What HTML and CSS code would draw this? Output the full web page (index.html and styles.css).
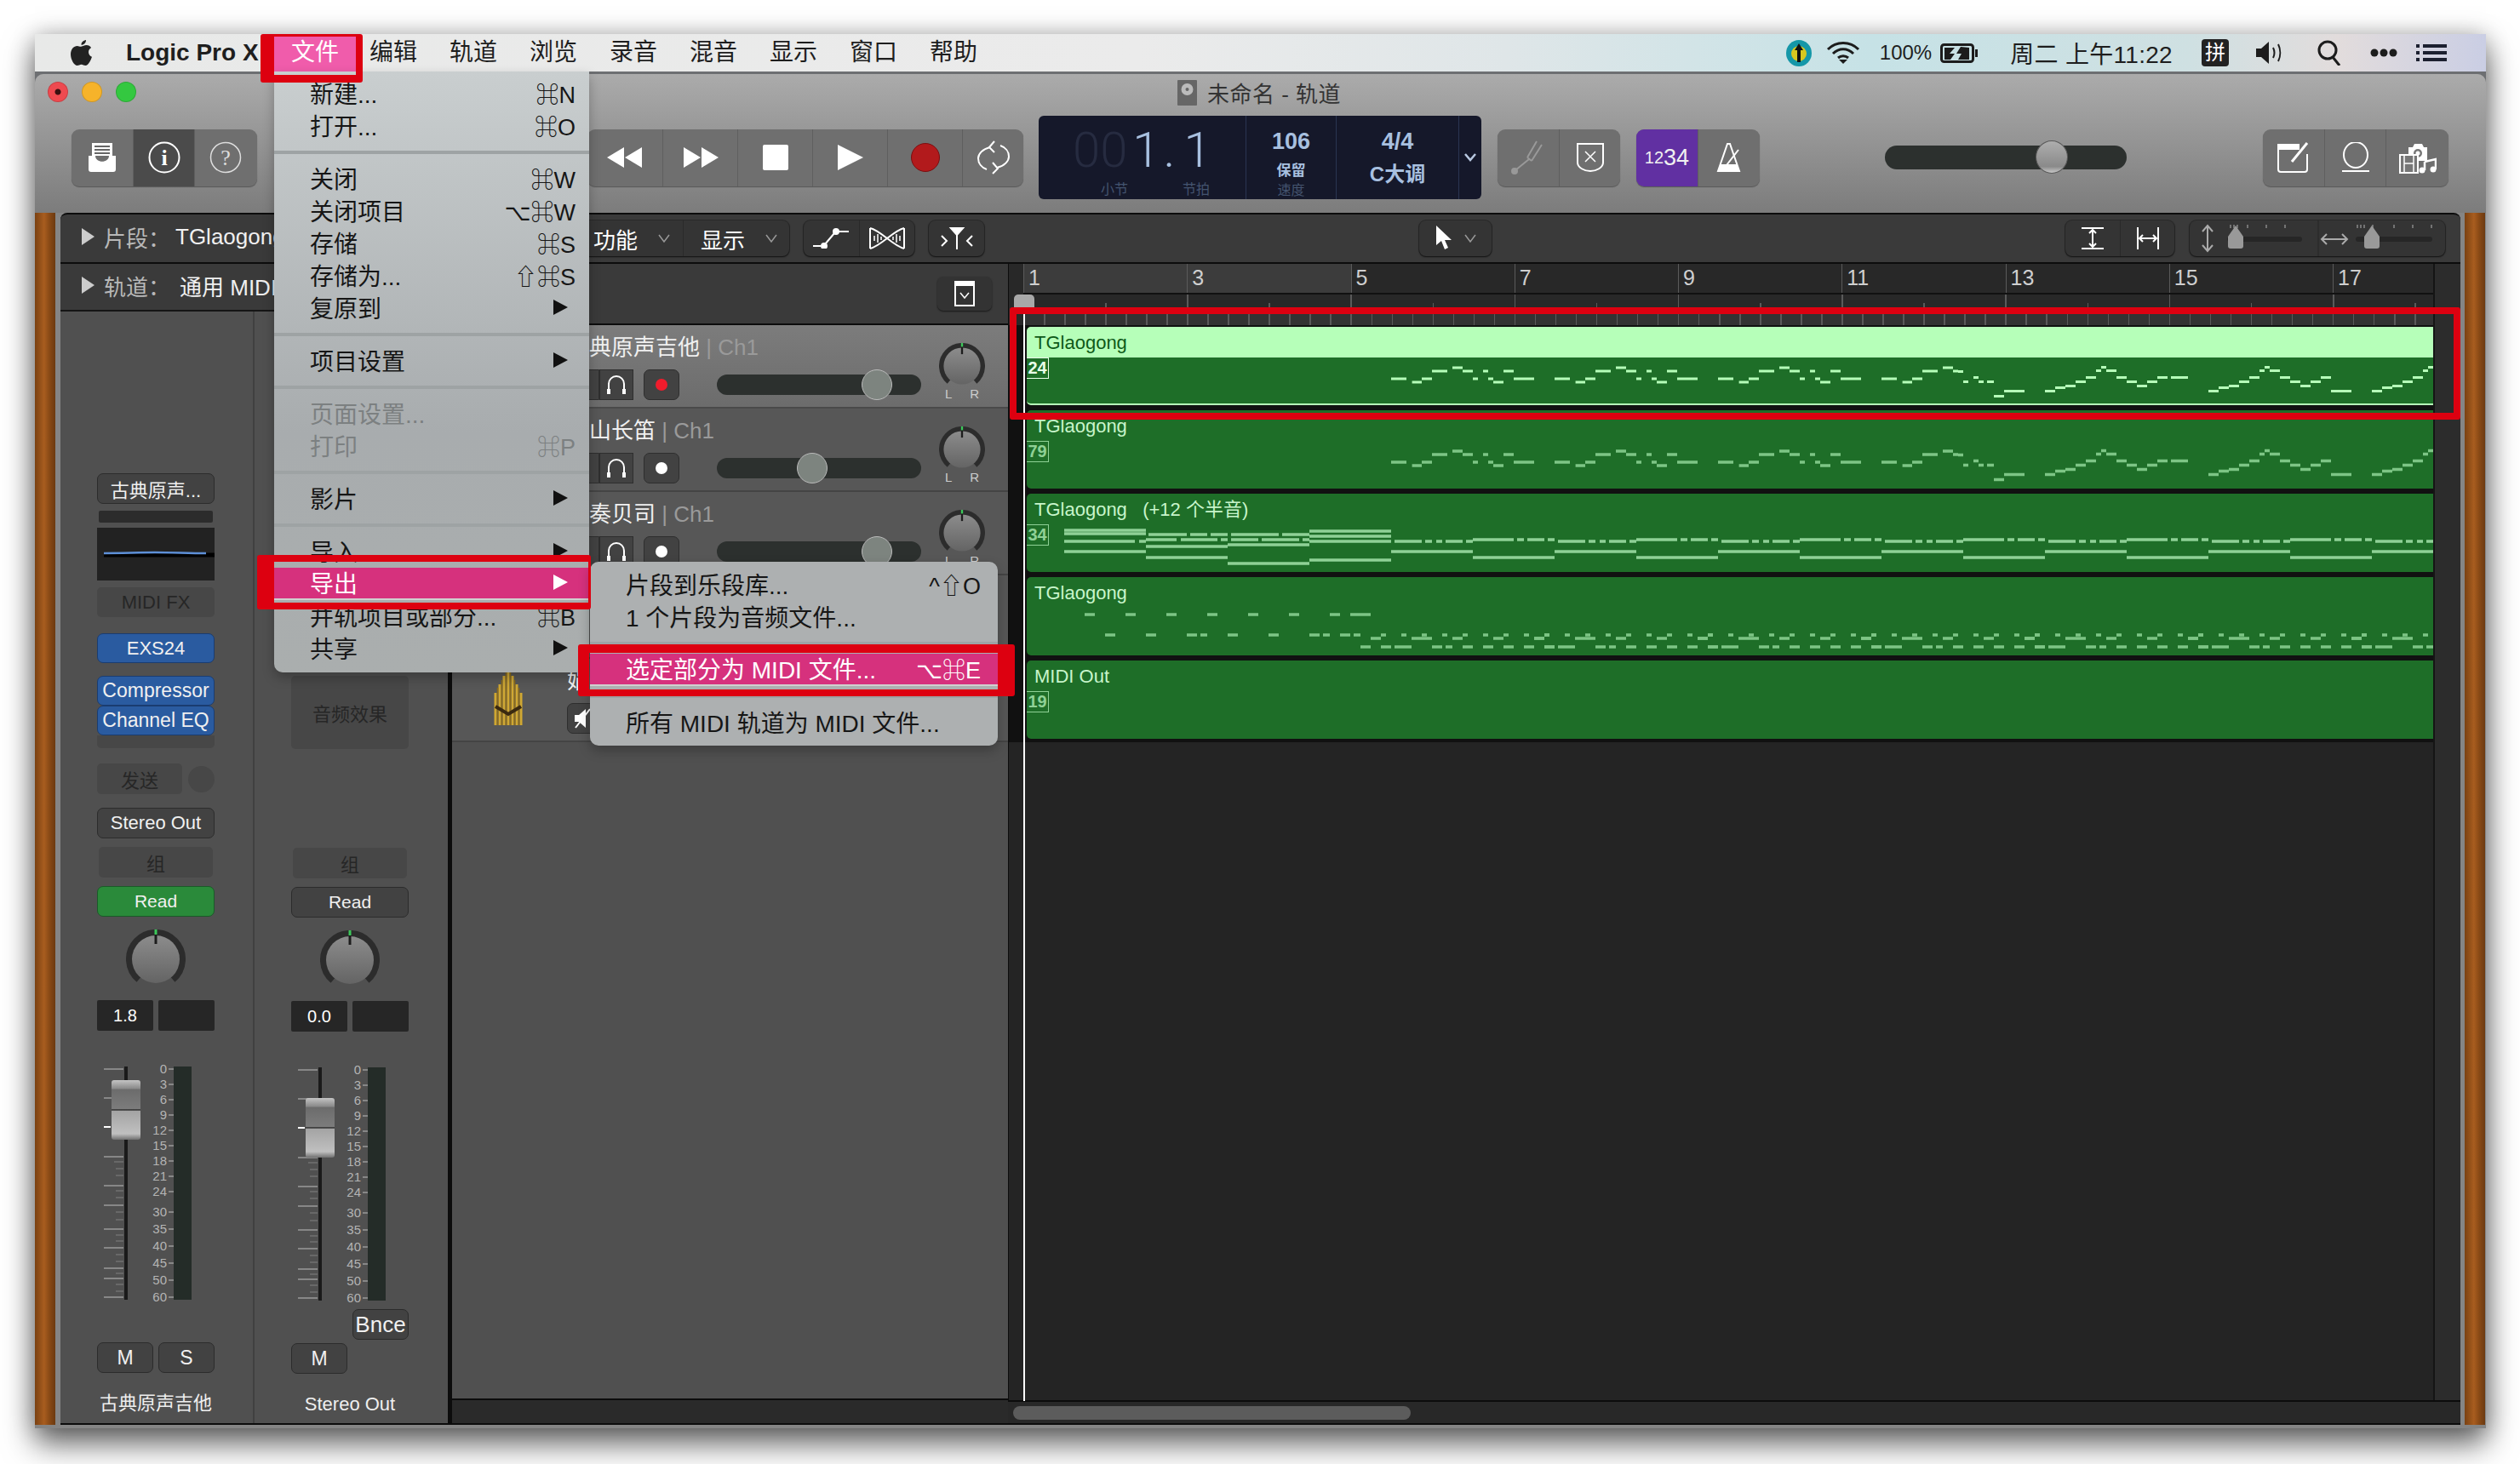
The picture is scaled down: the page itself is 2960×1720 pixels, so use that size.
FILE: index.html
```html
<!DOCTYPE html>
<html lang="zh-CN">
<head>
    <meta charset="UTF-8">
    <title>Logic Pro X - 轨道</title>
    <link rel="stylesheet" href="styles.css">
</head>
<body>
<svg class="defs" width="0" height="0">
    <defs>
        <linearGradient id="knobFill" x1="0" y1="0" x2="0" y2="1"><stop offset="0" stop-color="#8c8c8c"/><stop offset="1" stop-color="#646464"/></linearGradient>
        <linearGradient id="capFill" x1="0" y1="0" x2="0" y2="1">
            <stop offset="0" stop-color="#c4c4c4"/><stop offset=".14" stop-color="#8a8a8a"/><stop offset=".16" stop-color="#6c6c6c"/><stop offset=".48" stop-color="#7c7c7c"/>
            <stop offset=".5" stop-color="#222"/><stop offset=".52" stop-color="#a4a4a4"/><stop offset=".9" stop-color="#c0c0c0"/><stop offset="1" stop-color="#707070"/>
        </linearGradient>
        <symbol id="knob" viewBox="0 0 70 70">
            <path d="M15.1 58.7A31 31 0 1 1 54.9 58.7" fill="none" stroke="#2c2c2c" stroke-width="8"/>
            <circle cx="35" cy="35" r="28" fill="url(#knobFill)"/>
            <path d="M35 0v6" stroke="#3cc85a" stroke-width="3"/>
            <path d="M35 6v11" stroke="#1c1c1c" stroke-width="3"/>
        </symbol>
        <path id="melodyA" d="M1634 445h18M1658.6 449h11.4M1670 445h12M1682 436h18M1706 432h12M1718 436h12M1730 445h6M1742 436h6M1748 445h6M1754 449h12M1766 436h12M1778 445h24"/>
        <path id="melodyB" d="M2402 459.5h12M2414 455.5h12M2426 453.5h12M2438 448.5h12M2450 443.5h12M2462 435.5h6M2468 431.5h6M2474 435.5h12M2486 443.5h12M2498 448.5h12M2510 453.5h12M2522 448.5h12M2534 443.5h12"/>
        <path id="melodyEnd" d="M2210 445h18M2234.6 449h11.4M2246 445h12M2258 436h18M2282 432h12M2294 436h6M2300 436.5h6M2306 448.5h6M2318 443.5h6M2324 448.5h6M2334 448.5h8M2342 465.5h12M2354 459.5h24M2550 443.5h20M2738 459.5h24"/>
        <path id="chords" d="M1638 636h32M1674 636h8M1687 636h7M1698 636h20M1722 636h8M1634 648h96M1730 634h48M1782 634h8M1794 634h20M1818 634h8M1730 655h96"/>
        <path id="arp" d="M1622 746h6M1646 746h6M1670 746h6M1694 746h6M1718 746h6M1742 746h6M1766 746h6M1790 746h6M1814 746h6M1610 750h12M1658 750h12M1670 750h12M1706 750h12M1754 750h12M1802 750h12M1622 760h12M1638 760h20M1682 760h12M1698 760h8M1718 760h12M1742 760h12M1766 760h12M1790 760h12M1814 760h12"/>
    </defs>
</svg>

<div class="desktop">
    <div class="menubar">
        <svg class="apple" viewBox="0 0 25 31"><path fill="#222" d="M18 0c.3 3-2.5 6-5.500 5.800C12.200 3 15 .3 18 0zM12.800 7.500c1.500 0 3.300-1.500 5.800-1.500 2.300 0 4.300 1 5.500 2.900-4.600 2.600-3.800 9 .9 10.800-1.300 3.800-4.200 10.300-7.600 10.300-1.900 0-2.900-1.300-4.800-1.300-2 0-3.100 1.300-4.800 1.300C4 30 0 22.900 0 16.800 0 10.600 3.900 6.900 7.700 6.900c2.200 0 3.800 1.600 5.100.6z"/></svg>
        <span class="app-name">Logic Pro X</span>
        <span class="menu-title active">文件</span>
        <span class="menu-title first">编辑</span>
        <span class="menu-title">轨道</span>
        <span class="menu-title">浏览</span>
        <span class="menu-title">录音</span>
        <span class="menu-title">混音</span>
        <span class="menu-title">显示</span>
        <span class="menu-title">窗口</span>
        <span class="menu-title">帮助</span>
        <div class="status">
            <svg class="st-teal" width="30" height="31" viewBox="0 0 30 31"><ellipse cx="15" cy="15.5" rx="15" ry="15.5" fill="#1597a8"/><circle cx="15" cy="16" r="9" fill="#d8c820"/><path d="M15 4l-5 8h3v14h4V12h3z" fill="#111"/></svg>
            <svg class="st-wifi" width="40" height="28" viewBox="0 0 40 28" fill="none" stroke="#1c1c1c" stroke-width="3"><path d="M2 10C12 0 28 0 38 10M8 15C15 8 25 8 32 15M14 20c3.5-3 8.5-3 12 0"/><path d="M20 27l-5-5h10z" fill="#1c1c1c" stroke="none"/></svg>
            <span class="st-pct">100%</span>
            <svg class="st-batt" width="45" height="23" viewBox="0 0 45 23"><rect x="1.500" y="1.500" width="37" height="20" rx="3" fill="none" stroke="#1c1c1c" stroke-width="3"/><path d="M41 7h3v9h-3z" fill="#1c1c1c"/><path d="M5 5h12l-6 7h6l-5 7H5zM24 4l-5 8h6l-4 7h13V5z" fill="#1c1c1c"/></svg>
            <span class="st-clock">周二 上午11:22</span>
            <span class="st-ime">拼</span>
            <svg class="st-vol" width="34" height="28" viewBox="0 0 34 28"><path d="M0 9h6l9-8v26l-9-8H0z" fill="#1c1c1c"/><path d="M20 8c2 4 2 8 0 12M26 4c3 6 3 14 0 20" fill="none" stroke="#1c1c1c" stroke-width="2"/></svg>
            <svg class="st-search" width="29" height="30" viewBox="0 0 29 30" fill="none" stroke="#1c1c1c" stroke-width="3"><circle cx="12" cy="12" r="10"/><path d="M18 20l8 10"/></svg>
            <svg class="st-dots" width="32" height="10" viewBox="0 0 32 10" fill="#1c1c1c"><circle cx="5" cy="5" r="4.500"/><circle cx="16" cy="5" r="4.500"/><circle cx="27" cy="5" r="4.500"/></svg>
            <svg class="st-list" width="36" height="20" viewBox="0 0 36 20" fill="#1c2030"><path d="M0 0h4v4H0zM8 0h28v4H8zM0 8h4v4H0zM8 8h28v4H8zM0 16h4v4H0zM8 16h28v4H8z"/></svg>
        </div>
    </div>

    <div class="window">
        <div class="titlebar">
            <div class="title-row">
                <div class="lights">
                    <span class="light red"></span>
                    <span class="light yellow"></span>
                    <span class="light green"></span>
                </div>
                <svg class="doc-icon" width="23" height="30" viewBox="0 0 23 30"><rect width="23" height="30" rx="1" fill="#666"/><circle cx="11.5" cy="11" r="7" fill="#bbb"/><circle cx="11.5" cy="11" r="2" fill="#666"/></svg>
                <span class="doc-title">未命名 - 轨道</span>
            </div>
            <div class="toolbar">
                <div class="tb-group g-left">
                    <div class="tb-btn w72">
                        <svg width="32" height="34" viewBox="0 0 32 34"><path fill="#fff" d="M4 0h24v15H4z"/><path stroke="#666" stroke-width="2" d="M7 4h18M7 8h18M7 12h18"/><path fill="#fff" d="M0 15h8c0 9 16 9 16 0h8v16a3 3 0 0 1-3 3H3a3 3 0 0 1-3-3z"/></svg>
                    </div>
                    <div class="tb-btn w72 pressed">
                        <svg width="38" height="38" viewBox="0 0 38 38"><circle cx="19" cy="19" r="17.5" fill="none" stroke="#fff" stroke-width="2"/><text x="19" y="28" text-anchor="middle" class="glyph-i">i</text></svg>
                    </div>
                    <div class="tb-btn w72">
                        <svg width="38" height="38" viewBox="0 0 38 38"><circle cx="19" cy="19" r="17.5" fill="none" stroke="#ddd" stroke-width="1.5"/><text x="19" y="28" text-anchor="middle" class="glyph-q">?</text></svg>
                    </div>
                </div>
                <div class="tb-group g-transport">
                    <div class="tb-btn w88"><svg width="42" height="24" viewBox="0 0 42 24" fill="#fff"><path d="M0 12L20 0v24zM21 12L41 0v24z"/></svg></div>
                    <div class="tb-btn w88"><svg width="42" height="24" viewBox="0 0 42 24" fill="#fff"><path d="M1 0l20 12L1 24zM22 0l20 12-20 12z"/></svg></div>
                    <div class="tb-btn w88"><svg width="30" height="30" viewBox="0 0 30 30"><rect width="30" height="30" rx="2" fill="#fff"/></svg></div>
                    <div class="tb-btn w88"><svg width="30" height="30" viewBox="0 0 30 30"><path d="M0 0l30 15L0 30z" fill="#fff"/></svg></div>
                    <div class="tb-btn w88"><svg width="34" height="34" viewBox="0 0 34 34"><circle cx="17" cy="17" r="16.5" fill="#b21a1c" stroke="#7a1012"/></svg></div>
                    <div class="tb-btn grow"><svg width="42" height="40" viewBox="0 0 42 40" fill="none" stroke="#fff" stroke-width="2"><path d="M17 8C8 10 3 16 3 21c0 6 4 11 10 13M25 32c9-2 14-8 14-13 0-6-4-11-10-13"/><path d="M22 1l-6 7 6 6M20 26l6 7-6 6"/></svg></div>
                </div>
                <div class="lcd">
                    <div class="lcd-pos">
                        <div class="lcd-digits"><span class="dim">00</span><span>1</span><span class="dot">.</span><span>1</span></div>
                        <div class="lcd-labels"><span>小节</span><span>节拍</span></div>
                    </div>
                    <div class="lcd-tempo">
                        <span class="lcd-num">106</span>
                        <span class="lcd-mid">保留</span>
                        <span class="lcd-sub">速度</span>
                    </div>
                    <div class="lcd-sig">
                        <span class="lcd-num">4/4</span>
                        <span class="lcd-key">C大调</span>
                    </div>
                    <div class="lcd-more"><svg width="14" height="10" viewBox="0 0 14 10" fill="none" stroke="#b8c8e0" stroke-width="2.5"><path d="M1 1l6 7 6-7"/></svg></div>
                </div>
                <div class="tb-group g-tune">
                    <div class="tb-btn w72"><svg width="40" height="40" viewBox="0 0 40 40" fill="none" stroke="#999" stroke-width="2"><path d="M30 1L19 20M36 5L24 24M19 20l5 4M21 22L5 35"/><circle cx="4" cy="36" r="3" fill="#999"/></svg></div>
                    <div class="tb-btn grow"><svg width="32" height="34" viewBox="0 0 32 34" fill="none" stroke="#fff" stroke-width="2"><path d="M1 1h30v22c0 6-8 10-15 10S1 29 1 23z"/><path d="M10 10l12 12M22 10L10 22" stroke-width="1.5"/></svg></div>
                </div>
                <div class="tb-group g-count">
                    <div class="tb-btn count"><span class="small">12</span>34</div>
                    <div class="tb-btn grow"><svg width="30" height="34" viewBox="0 0 30 34"><path d="M13 1h3l11 32H2z" fill="none" stroke="#fff" stroke-width="2"/><path d="M5 25h19l4 9H1z" fill="#fff"/><path d="M12 26L26 8" stroke="#fff" stroke-width="2"/></svg></div>
                </div>
                <div class="master">
                    <div class="master-knob"></div>
                </div>
                <div class="tb-group g-right">
                    <div class="tb-btn w72"><svg width="38" height="36" viewBox="0 0 38 36" fill="none" stroke="#fff" stroke-width="2"><path d="M35 14v18a3 3 0 0 1-3 3H4a3 3 0 0 1-3-3V6"/><path d="M1 3h24v5H1z" fill="#fff"/><path d="M17 23L35 1" stroke-width="3"/></svg></div>
                    <div class="tb-btn w72"><svg width="36" height="36" viewBox="0 0 36 36" fill="none" stroke="#fff" stroke-width="2"><ellipse cx="18" cy="15" rx="14" ry="15"/><path d="M2 34h32"/></svg></div>
                    <div class="tb-btn grow"><svg width="44" height="38" viewBox="0 0 44 38"><path d="M11 7h5l2-4h9l2 4h4v16H11z" fill="#fff"/><circle cx="22" cy="14" r="5" fill="#777"/><circle cx="22" cy="14" r="2.5" fill="#fff"/><rect x="1" y="16" width="21" height="21" fill="#777" stroke="#fff" stroke-width="2"/><path d="M6 16v21M17 16v21M6 26h11" stroke="#fff" stroke-width="1.5"/><path d="M30 24l13-3v12" fill="none" stroke="#fff" stroke-width="2.5"/><circle cx="27" cy="34" r="3.5" fill="#fff"/><circle cx="40" cy="33" r="3.5" fill="#fff"/><path d="M30 24v10" stroke="#fff" stroke-width="2.5"/></svg></div>
                </div>
            </div>
        </div>

        <div class="workspace">
            <div class="wood"></div>
            <div class="panel">
                <div class="ctl-bar">
                    <div class="ctl-info"><span class="tri"></span><span class="info-label">片段：</span><span class="info-value">TGlaogong</span></div>
                    <div class="ctl-group g-func">
                        <div class="ctl-cell func">功能<svg class="chev" width="14" height="10" viewBox="0 0 14 10" fill="none" stroke="#999" stroke-width="1.5"><path d="M1 1l6 8 6-8"/></svg></div>
                        <div class="ctl-cell show">显示<svg class="chev" width="14" height="10" viewBox="0 0 14 10" fill="none" stroke="#999" stroke-width="1.5"><path d="M1 1l6 8 6-8"/></svg></div>
                    </div>
                    <div class="ctl-group g-auto">
                        <div class="ctl-cell w65"><svg width="44" height="24" viewBox="0 0 44 24" fill="none" stroke="#fff" stroke-width="2"><path d="M0 21h9M14 19L25 6M30 4h12"/><circle cx="13" cy="21" r="3" fill="#fff"/><circle cx="27" cy="4" r="3" fill="#fff"/></svg></div>
                        <div class="ctl-cell w65"><svg width="42" height="26" viewBox="0 0 42 26" fill="none" stroke="#fff" stroke-width="2"><path d="M1 1C14 4 28 22 41 25M1 25C14 22 28 4 41 1M1 1v24M41 1v24"/><path d="M6 10v6M10 8v10M14 11v4M28 11v4M32 8v10M36 10v6" stroke-width="1.5"/></svg></div>
                    </div>
                    <div class="ctl-group g-snap">
                        <div class="ctl-cell w65"><svg width="40" height="26" viewBox="0 0 40 26" fill="none" stroke="#fff" stroke-width="2"><path d="M12 0h16l-8 9z" fill="#fff"/><path d="M20 5v21M2 10l6 6-6 6M38 10l-6 6 6 6"/></svg></div>
                    </div>
                    <div class="ctl-group g-tool">
                        <div class="ctl-cell tool"><svg width="20" height="30" viewBox="0 0 20 30"><path d="M1 0v23l6-5 4 10 4-2-4-9h8z" fill="#fff"/></svg><svg class="chev" width="14" height="10" viewBox="0 0 14 10" fill="none" stroke="#999" stroke-width="1.5"><path d="M1 1l6 8 6-8"/></svg></div>
                    </div>
                    <div class="ctl-group g-fit">
                        <div class="ctl-cell w64"><svg width="26" height="26" viewBox="0 0 26 26" fill="none" stroke="#fff" stroke-width="2"><path d="M0 1h26M0 25h26M13 3v20M9 7l4-4 4 4M9 19l4 4 4-4"/></svg></div>
                        <div class="ctl-cell w64"><svg width="26" height="26" viewBox="0 0 26 26" fill="none" stroke="#fff" stroke-width="2"><path d="M1 0v26M25 0v26M3 13h20M7 9l-4 4 4 4M19 9l4 4-4 4"/></svg></div>
                    </div>
                    <div class="ctl-group g-zoom">
                        <svg width="300" height="42" viewBox="0 0 300 42" fill="none">
                            <path d="M21 7v28M15 13l6-7 6 7M15 29l6 7 6-7" stroke="#aaa" stroke-width="2"/>
                            <rect x="44" y="19" width="88" height="6" rx="3" fill="#262626"/>
                            <path d="M48 5v4M52 5v4M56 5v4M68 5v4M90 5v4M112 5v4" stroke="#888" stroke-width="1.5"/>
                            <path d="M54 6l9 13v11a3 3 0 0 1-3 3H48a3 3 0 0 1-3-3V19z" fill="#999"/>
                            <path d="M151 0v42" stroke="#2a2a2a" stroke-width="1.5"/>
                            <path d="M155 22h30M161 16l-6 6 6 6M179 16l6 6-6 6" stroke="#aaa" stroke-width="2"/>
                            <rect x="195" y="19" width="90" height="6" rx="3" fill="#262626"/>
                            <path d="M197 5v4M201 5v4M205 5v4M215 5v4M240 5v4M262 5v4M284 5v4" stroke="#888" stroke-width="1.5"/>
                            <path d="M214 6l9 13v11a3 3 0 0 1-3 3h-12a3 3 0 0 1-3-3V19z" fill="#999"/>
                        </svg>
                    </div>
                </div>

                <div class="panel-body">
                    <div class="inspector">
                        <div class="ctl-info second"><span class="tri"></span><span class="info-label">轨道：</span><span class="info-value gap">通用 MIDI</span></div>
                        <div class="strips">
                            <div class="strip">
                                <div class="s-btn name-btn">古典原声...</div>
                                <div class="s-bar"></div>
                                <div class="s-eq"><svg width="138" height="62" viewBox="0 0 138 62" fill="none"><path d="M8 32h130" stroke="#000" stroke-width="5"/><path d="M8 30c40 0 40-1 60-1s40 1 60 1" stroke="#5e90d8" stroke-width="2.5"/></svg></div>
                                <div class="s-slot midi">MIDI FX</div>
                                <div class="s-btn blue exs">EXS24</div>
                                <div class="s-btn blue comp">Compressor</div>
                                <div class="s-btn blue">Channel EQ</div>
                                <div class="s-empty"></div>
                                <div class="s-send"><span class="s-slot send-slot">发送</span><span class="send-dot"></span></div>
                                <div class="s-btn out">Stereo Out</div>
                                <div class="s-slot group">组</div>
                                <div class="s-btn read on">Read</div>
                                <svg class="s-knob" width="70" height="70"><use href="#knob"/></svg>
                                <div class="s-values"><span>1.8</span><span></span></div>
                                <svg class="s-fader" width="138" height="280" viewBox="0 0 138 280">
                                    <path d="M34 4v274" stroke="#1a1a1a" stroke-width="4"/>
                                    <path d="M8 7h23M8 41h23M8 110h23M8 144h23M8 167h23M8 195h23M8 217h23M8 241h23M8 253h23M8 275h23" stroke="#999" stroke-width="1.5"/>
                                    <path d="M8 75h8" stroke="#fff" stroke-width="2"/>
                                    <path d="M20 116h11M22 124h9M22 132h9M22 150h9M22 158h9M22 175h9M22 184h9M22 202h9M22 209h9M22 225h9M22 233h9M22 247h9M22 260h9M22 268h9" stroke="#808080" stroke-width="1"/>
                                    <rect x="17" y="20" width="34" height="70" rx="3" fill="url(#capFill)"/>
                                    <path d="M84 7h6M84 25h6M84 43h6M84 61h6M84 79h6M84 97h6M84 115h6M84 133h6M84 151h6M84 175h6M84 195h6M84 215h6M84 235h6M84 255h6M84 275h6" stroke="#999" stroke-width="1.5"/>
                                    <rect x="90" y="4" width="21" height="274" fill="#242c28"/>
                                    <g class="scale-num">
                                        <text x="82" y="12">0</text><text x="82" y="30">3</text><text x="82" y="48">6</text><text x="82" y="66">9</text><text x="82" y="84">12</text><text x="82" y="102">15</text><text x="82" y="120">18</text><text x="82" y="138">21</text><text x="82" y="156">24</text><text x="82" y="180">30</text><text x="82" y="200">35</text><text x="82" y="220">40</text><text x="82" y="240">45</text><text x="82" y="260">50</text><text x="82" y="280">60</text>
                                    </g>
                                </svg>
                                <div class="s-ms ms-first"><span class="s-btn">M</span><span class="s-btn">S</span></div>
                                <div class="s-name">古典原声吉他</div>
                            </div>
                            <div class="strip second">
                                <div class="s-slot audio">音频效果</div>
                                <div class="s-slot group g2">组</div>
                                <div class="s-btn read">Read</div>
                                <svg class="s-knob" width="70" height="70"><use href="#knob"/></svg>
                                <div class="s-values"><span>0.0</span><span></span></div>
                                <svg class="s-fader" width="138" height="280" viewBox="0 0 138 280">
                                    <path d="M34 4v274" stroke="#1a1a1a" stroke-width="4"/>
                                    <path d="M8 7h23M8 41h23M8 110h23M8 144h23M8 167h23M8 195h23M8 217h23M8 241h23M8 253h23M8 275h23" stroke="#999" stroke-width="1.5"/>
                                    <path d="M8 75h8" stroke="#fff" stroke-width="2"/>
                                    <path d="M20 116h11M22 124h9M22 132h9M22 150h9M22 158h9M22 175h9M22 184h9M22 202h9M22 209h9M22 225h9M22 233h9M22 247h9M22 260h9M22 268h9" stroke="#808080" stroke-width="1"/>
                                    <rect x="17" y="40" width="34" height="70" rx="3" fill="url(#capFill)"/>
                                    <path d="M84 7h6M84 25h6M84 43h6M84 61h6M84 79h6M84 97h6M84 115h6M84 133h6M84 151h6M84 175h6M84 195h6M84 215h6M84 235h6M84 255h6M84 275h6" stroke="#999" stroke-width="1.5"/>
                                    <rect x="90" y="4" width="21" height="274" fill="#242c28"/>
                                    <g class="scale-num">
                                        <text x="82" y="12">0</text><text x="82" y="30">3</text><text x="82" y="48">6</text><text x="82" y="66">9</text><text x="82" y="84">12</text><text x="82" y="102">15</text><text x="82" y="120">18</text><text x="82" y="138">21</text><text x="82" y="156">24</text><text x="82" y="180">30</text><text x="82" y="200">35</text><text x="82" y="220">40</text><text x="82" y="240">45</text><text x="82" y="260">50</text><text x="82" y="280">60</text>
                                    </g>
                                </svg>
                                <div class="s-bnce"><span class="s-btn">Bnce</span></div>
                                <div class="s-ms"><span class="s-btn">M</span></div>
                                <div class="s-name">Stereo Out</div>
                            </div>
                        </div>
                    </div>

                    <div class="tracks">
                        <div class="tracks-head">
                            <div class="add-btn"><svg width="24" height="30" viewBox="0 0 24 30"><path d="M1 1h22v28H1z" fill="#333" stroke="#fff" stroke-width="2"/><path d="M1 1h22v5H1z" fill="#fff"/><path d="M7 14l5 6 5-6" fill="none" stroke="#fff" stroke-width="1.5"/></svg></div>
                        </div>
                        <div class="track selected">
                            <div class="tr-icon"></div>
                            <div class="tr-main">
                                <div class="tr-name">古典原声吉他<span class="ch"> | Ch1</span></div>
                                <div class="tr-ctl">
                                    <span class="tr-btn mute"></span>
                                    <span class="tr-btn"><svg width="24" height="26" viewBox="0 0 24 26" fill="none" stroke="#fff" stroke-width="2"><path d="M3 22V12a9 9 0 0 1 18 0v10"/><path d="M3 18v6M21 18v6" stroke-width="4"/></svg></span>
                                    <span class="tr-btn rec"><i class="rec-dot live"></i></span>
                                    <div class="slider"><span class="slider-knob" style="left:170px"></span></div>
                                </div>
                            </div>
                            <div class="pan"><svg width="54" height="54"><use href="#knob"/></svg><div class="lr"><span>L</span><span>R</span></div></div>
                        </div>
                        <div class="track">
                            <div class="tr-icon"></div>
                            <div class="tr-main">
                                <div class="tr-name">高山长笛<span class="ch"> | Ch1</span></div>
                                <div class="tr-ctl">
                                    <span class="tr-btn mute"></span>
                                    <span class="tr-btn"><svg width="24" height="26" viewBox="0 0 24 26" fill="none" stroke="#fff" stroke-width="2"><path d="M3 22V12a9 9 0 0 1 18 0v10"/><path d="M3 18v6M21 18v6" stroke-width="4"/></svg></span>
                                    <span class="tr-btn rec"><i class="rec-dot"></i></span>
                                    <div class="slider"><span class="slider-knob" style="left:94px"></span></div>
                                </div>
                            </div>
                            <div class="pan"><svg width="54" height="54"><use href="#knob"/></svg><div class="lr"><span>L</span><span>R</span></div></div>
                        </div>
                        <div class="track">
                            <div class="tr-icon"></div>
                            <div class="tr-main">
                                <div class="tr-name">演奏贝司<span class="ch"> | Ch1</span></div>
                                <div class="tr-ctl">
                                    <span class="tr-btn mute"></span>
                                    <span class="tr-btn"><svg width="24" height="26" viewBox="0 0 24 26" fill="none" stroke="#fff" stroke-width="2"><path d="M3 22V12a9 9 0 0 1 18 0v10"/><path d="M3 18v6M21 18v6" stroke-width="4"/></svg></span>
                                    <span class="tr-btn rec"><i class="rec-dot"></i></span>
                                    <div class="slider"><span class="slider-knob" style="left:170px"></span></div>
                                </div>
                            </div>
                            <div class="pan"><svg width="54" height="54"><use href="#knob"/></svg><div class="lr"><span>L</span><span>R</span></div></div>
                        </div>
                        <div class="track"></div>
                        <div class="track">
                            <div class="tr-icon">
                                <svg width="34" height="72" viewBox="0 0 34 72" fill="none" stroke-width="3"><path d="M2 32v38M7 22v48M12 12v58M17 2v68M22 12v58M27 22v48M32 32v38" stroke="#d0a832"/><path d="M4.500 26v44M9.500 17v53M14.500 8v62M19.500 8v62M24.500 17v53M29.500 26v44" stroke="#8a6a18" stroke-width="1.500"/><path d="M2 48l15 9 15-9" stroke="#3a2a10" stroke-width="4"/></svg>
                            </div>
                            <div class="tr-main">
                                <div class="tr-name">娟</div>
                                <div class="tr-ctl">
                                    <span class="tr-btn mute"><svg width="22" height="24" viewBox="0 0 22 24" fill="#fff"><path d="M1 8h5l8-7v22l-8-7H1z"/><path d="M2 23L19 1" stroke="#fff" stroke-width="2"/></svg></span>
                                </div>
                            </div>
                        </div>
                        <div class="tracks-rest"></div>
                        <div class="tracks-foot"></div>
                    </div>

                    <div class="timeline">
                        <div class="tl-body">
                            <div class="tl-main">
                                <div class="ruler">
                                    <div class="bars">
                                        <span class="bar cycle">1</span><span class="bar cycle">3</span><span class="bar">5</span><span class="bar">7</span><span class="bar">9</span><span class="bar">11</span><span class="bar">13</span><span class="bar">15</span><span class="bar last">17</span>
                                    </div>
                                    <div class="ticks-big"></div>
                                    <div class="ticks-small"></div>
                                </div>
                                <div class="lane">
                                    <div class="region active">
                                        <div class="reg-title">TGlaogong</div>
                                        <div class="reg-num">24</div>
                                        <svg class="notes" viewBox="1206 384 1652 92" stroke="#b6ffb9" stroke-width="3"><use href="#melodyA"/><use href="#melodyA" x="192"/><use href="#melodyA" x="384"/><use href="#melodyEnd"/><use href="#melodyB"/><use href="#melodyB" x="192"/><use href="#melodyB" x="384"/></svg>
                                    </div>
                                </div>
                                <div class="lane">
                                    <div class="region">
                                        <div class="reg-title">TGlaogong</div>
                                        <div class="reg-num">79</div>
                                        <svg class="notes" viewBox="1206 384 1652 92" stroke="#7dc585" stroke-width="3.5"><use href="#melodyA"/><use href="#melodyA" x="192"/><use href="#melodyA" x="384"/><use href="#melodyEnd"/><use href="#melodyB"/><use href="#melodyB" x="192"/><use href="#melodyB" x="384"/></svg>
                                    </div>
                                </div>
                                <div class="lane">
                                    <div class="region">
                                        <div class="reg-title">TGlaogong&nbsp;&nbsp; (+12 个半音)</div>
                                        <div class="reg-num">34</div>
                                        <svg class="notes" viewBox="1206 580 1652 92" stroke="#8fd196" stroke-width="3.5">
                                            <path d="M1250 623h96M1250 627h96M1250 636h83M1338 636h8M1250 648h96M1349 628h45M1398 628h20M1422 628h20M1346 634h36M1387 634h43M1434 634h8M1346 642h96M1346 655h96M1446 628h56M1506 628h32M1446 634h32M1482 634h44M1530 634h8M1442 640h96M1442 662h96M1538 624h96M1538 630h96M1538 636h96M1538 658h96"/>
                                            <use href="#chords"/><use href="#chords" x="192"/><use href="#chords" x="384"/><use href="#chords" x="576"/><use href="#chords" x="768"/><use href="#chords" x="960"/><use href="#chords" x="1152"/>
                                        </svg>
                                    </div>
                                </div>
                                <div class="lane">
                                    <div class="region">
                                        <div class="reg-title">TGlaogong</div>
                                        <svg class="notes" viewBox="1206 678 1652 92" stroke="#7dc585" stroke-width="3.5">
                                            <path d="M1274 722h12M1322 722h12M1370 722h12M1418 722h12M1466 722h12M1514 722h12M1562 722h12M1586 722h24M1298 746h12M1346 746h12M1394 746h12M1410 746h8M1442 746h12M1490 746h12M1538 746h12M1554 746h8M1574 746h12M1590 746h8M1598 760h12"/>
                                            <use href="#arp"/><use href="#arp" x="192"/><use href="#arp" x="384"/><use href="#arp" x="576"/><use href="#arp" x="768"/><use href="#arp" x="960"/><use href="#arp" x="1152"/>
                                        </svg>
                                    </div>
                                </div>
                                <div class="lane">
                                    <div class="region">
                                        <div class="reg-title">MIDI Out</div>
                                        <div class="reg-num">19</div>
                                    </div>
                                </div>
                                <div class="tl-rest"></div>
                            </div>
                            <div class="tl-side"></div>
                        </div>
                        <div class="tl-foot"><div class="scroll-thumb"></div></div>
                    </div>
                </div>
            </div>
            <div class="wood right"></div>
        </div>
    </div>
</div>

<div class="playhead"></div>
<div class="playhead-cap"></div>

<div class="menu file-menu">
    <div class="mi"><span>新建...</span><span class="key">⌘N</span></div>
    <div class="mi"><span>打开...</span><span class="key">⌘O</span></div>
    <div class="sep"></div>
    <div class="mi"><span>关闭</span><span class="key">⌘W</span></div>
    <div class="mi"><span>关闭项目</span><span class="key">⌥⌘W</span></div>
    <div class="mi"><span>存储</span><span class="key">⌘S</span></div>
    <div class="mi"><span>存储为...</span><span class="key">⇧⌘S</span></div>
    <div class="mi"><span>复原到</span><i class="arrow"></i></div>
    <div class="sep"></div>
    <div class="mi"><span>项目设置</span><i class="arrow"></i></div>
    <div class="sep"></div>
    <div class="mi off"><span>页面设置...</span></div>
    <div class="mi off"><span>打印</span><span class="key">⌘P</span></div>
    <div class="sep"></div>
    <div class="mi"><span>影片</span><i class="arrow"></i></div>
    <div class="sep"></div>
    <div class="mi"><span>导入</span><i class="arrow"></i></div>
    <div class="mi hl"><span>导出</span><i class="arrow"></i></div>
    <div class="mi"><span>并轨项目或部分...</span><span class="key">⌘B</span></div>
    <div class="mi"><span>共享</span><i class="arrow"></i></div>
</div>

<div class="menu sub-menu">
    <div class="mi"><span>片段到乐段库...</span><span class="key">^⇧O</span></div>
    <div class="mi"><span>1 个片段为音频文件...</span></div>
    <div class="sep"></div>
    <div class="mi hl"><span>选定部分为 MIDI 文件...</span><span class="key">⌥⌘E</span></div>
    <div class="sep"></div>
    <div class="mi"><span>所有 MIDI 轨道为 MIDI 文件...</span></div>
</div>

<div class="mark mark-file"></div>
<div class="mark mark-export"></div>
<div class="mark mark-midi"></div>
<div class="mark mark-region"></div>
</body>
</html>
```

FILE: styles.css
```css
:root {
    --ui-font: "Liberation Sans", "Noto Sans CJK SC", "DejaVu Sans", sans-serif;
    --mark-red: #dd0010;
    --region-green: #1e6e28;
    --region-light: #b6ffb9;
    --hilite: #d6317d;
}

html, body {
    margin: 0;
    padding: 0;
}

body {
    width: 2960px;
    height: 1720px;
    overflow: hidden;
    background: #fff;
    font-family: var(--ui-font);
    color: #fff;
}

svg {
    display: block;
    flex: none;
}

.defs {
    position: absolute;
}

.desktop {
    margin: 40px 0 0 41px;
    width: 2879px;
    height: 1638px;
    display: flex;
    flex-direction: column;
    background: #6d6f72;
    box-shadow: 0 18px 34px rgba(0, 0, 0, 0.6), 0 0 26px rgba(0, 0, 0, 0.22);
}

/* menu bar */
.menubar {
    height: 44px;
    flex: none;
    display: flex;
    align-items: center;
    background: linear-gradient(90deg, #e8e9e8 0%, #ebebeb 45%, #dfe6e8 60%, #c6e2e6 75%, #cfe0e2 88%, #e2dcdc 94%, #cacee4 100%);
    color: #1e1e1e;
    font-size: 28px;
}

.apple {
    width: 25px;
    height: 31px;
    margin-left: 42px;
}

.app-name {
    margin-left: 40px;
    width: 174px;
    font-weight: bold;
}

.menu-title {
    width: 94px;
    height: 44px;
    line-height: 44px;
    text-align: center;
}

.menu-title.active {
    width: 96px;
    background: #f05cab;
    color: #fff;
}

.menu-title.first {
    margin-left: -3px;
}

.status {
    margin-left: auto;
    margin-right: 46px;
    display: flex;
    align-items: center;
}

.st-wifi { margin-left: 17px; }
.st-pct { margin-left: 23px; font-size: 24px; }
.st-batt { margin-left: 10px; }
.st-clock { margin-left: 37px; font-size: 28px; letter-spacing: 0.3px; white-space: nowrap; }
.st-ime {
    margin-left: 34px;
    width: 32px;
    height: 32px;
    line-height: 31px;
    text-align: center;
    background: #222;
    color: #fff;
    border-radius: 4px;
    font-size: 24px;
}
.st-vol { margin-left: 32px; }
.st-search { margin-left: 38px; }
.st-dots { margin-left: 33px; }
.st-list { margin-left: 22px; }

/* window chrome */
.window {
    flex: 1;
    display: flex;
    flex-direction: column;
    margin-top: 3px;
    border-radius: 10px 10px 0 0;
    background: #858585;
    overflow: hidden;
}

.titlebar {
    height: 163px;
    flex: none;
    padding-left: 43px;
    background: linear-gradient(#ababab, #7c7c7c);
}

.title-row {
    height: 49px;
    margin-left: -43px;
    position: relative;
    display: flex;
    align-items: center;
    padding: 0 0 6px 1342px;
    box-sizing: border-box;
}

.lights {
    position: absolute;
    left: 15px;
    top: 9px;
    display: flex;
    gap: 16px;
}

.light {
    width: 24px;
    height: 24px;
    border-radius: 50%;
    box-sizing: border-box;
    border: 1px solid rgba(0, 0, 0, 0.15);
}

.light.red { background: radial-gradient(circle, #3a1010 0 3px, #ee4a50 4px); }
.light.yellow { background: #f6b32a; }
.light.green { background: #34c840; }

.doc-title {
    margin-left: 12px;
    font-size: 26px;
    color: #333;
    letter-spacing: 0.5px;
}

.toolbar {
    height: 98px;
    display: flex;
    align-items: center;
}

.tb-group {
    height: 67px;
    display: flex;
    border-radius: 9px;
    overflow: hidden;
    background: #6f6f6f;
    box-shadow: 0 1px 1px rgba(0, 0, 0, 0.35);
}

.tb-btn {
    display: flex;
    align-items: center;
    justify-content: center;
    border-left: 1px solid #5f5f5f;
    box-sizing: border-box;
}

.tb-btn:first-child {
    border-left: none;
}

.w72 { width: 72px; }
.w88 { width: 88px; }
.grow { flex: 1; }
.pressed { background: #4b4b4b; }

.glyph-i {
    font: bold 26px "Liberation Serif", serif;
    fill: #fff;
}

.glyph-q {
    font: 26px "Liberation Serif", serif;
    fill: #ddd;
}

.g-left { width: 218px; }
.g-transport { width: 512px; margin-left: 388px; }
.g-tune { width: 144px; margin-left: 19px; }
.g-count { width: 145px; margin-left: 19px; }
.g-right { width: 218px; margin-left: 160px; }

.count {
    width: 72px;
    background: #6130a2;
    color: #f0f0f0;
    font-size: 27px;
    border: none;
    white-space: nowrap;
}

.small {
    font-size: 20px;
}

/* lcd */
.lcd {
    width: 520px;
    height: 98px;
    margin-left: 18px;
    display: flex;
    background: #15182a;
    border-radius: 6px;
    color: #a8c0e0;
}

.lcd-pos {
    width: 243px;
    box-sizing: border-box;
    padding-left: 40px;
    position: relative;
}

.lcd-digits {
    display: flex;
    height: 78px;
    align-items: center;
    padding-top: 1px;
    box-sizing: border-box;
    font-family: Roboto, var(--ui-font);
    font-weight: 300;
    font-size: 58px;
}

.lcd-digits span:nth-child(2) {
    margin-left: 6px;
}

.lcd-digits .dim { color: #262b40; }

.lcd-digits .dot {
    margin: 0 10px 0 4px;
}

.lcd-labels {
    display: flex;
    padding: 1px 0 0 33px;
    gap: 64px;
    font-size: 16px;
    color: #44546f;
    line-height: 16px;
}

.lcd-tempo, .lcd-sig {
    display: flex;
    flex-direction: column;
    align-items: center;
    border-left: 1px solid #2a3552;
    box-sizing: border-box;
}

.lcd-tempo { width: 106px; padding-top: 14px; }
.lcd-sig { width: 144px; padding-top: 14px; }

.lcd-num {
    font-size: 27px;
    line-height: 32px;
    font-weight: bold;
}

.lcd-mid {
    font-size: 17px;
    line-height: 20px;
    margin-top: 9px;
    font-weight: bold;
}

.lcd-sub {
    font-size: 16px;
    line-height: 18px;
    margin-top: 4px;
    color: #44546f;
}

.lcd-key {
    font-size: 24px;
    margin-top: 8px;
    line-height: 30px;
    font-weight: bold;
}

.lcd-more {
    flex: 1;
    display: flex;
    align-items: center;
    justify-content: center;
    border-left: 1px solid #2a3552;
}

/* master volume */
.master {
    width: 284px;
    height: 28px;
    margin-left: 147px;
    border-radius: 14px;
    background: #2c302e;
    position: relative;
}

.master-knob {
    position: absolute;
    left: 177px;
    top: -6px;
    width: 38px;
    height: 39px;
    border-radius: 50%;
    background: linear-gradient(#aeaeae, #8a8a8a 80%, #c8c8c8);
    border: 1px solid #5a5a5a;
    box-sizing: border-box;
}

/* main area */
.workspace {
    flex: 1;
    display: flex;
    min-height: 0;
}

.wood {
    width: 24px;
    flex: none;
    margin-bottom: 4px;
    background: linear-gradient(90deg, #7a4112, #a85d1f 45%, #8a4a16 70%, #6c3a10);
}

.wood.right {
    margin-left: 5px;
}

.panel {
    width: 2819px;
    height: 1424px;
    margin-left: 6px;
    flex: none;
    border-top: 2px solid #0c0c0c;
    border-bottom: 2px solid #0c0c0c;
    box-sizing: border-box;
    display: flex;
    flex-direction: column;
    border-radius: 8px 8px 0 0;
    background: #0c0c0c;
    overflow: hidden;
}

.ctl-bar {
    height: 56px;
    flex: none;
    display: flex;
    align-items: center;
    background: #3a3a3a;
    font-size: 26px;
}

.ctl-info {
    width: 579px;
    height: 56px;
    flex: none;
    display: flex;
    align-items: center;
    padding: 0 0 4px 25px;
    box-sizing: border-box;
    white-space: nowrap;
    overflow: hidden;
}

.ctl-info.second {
    width: 455px;
    background: #3a3a3a;
    font-size: 26px;
    border-bottom: 2px solid #151515;
}

.tri {
    width: 0;
    height: 0;
    border-left: 15px solid #ccc;
    border-top: 10px solid transparent;
    border-bottom: 10px solid transparent;
    margin-right: 11px;
}

.info-label {
    color: #b8b8b8;
    width: 78px;
}

.info-value {
    color: #f0f0f0;
    margin-left: 6px;
}

.info-value.gap {
    margin-left: 11px;
}

.ctl-group {
    height: 42px;
    display: flex;
    align-items: center;
    flex: none;
    border-radius: 8px;
    background: #343434;
    box-shadow: 0 1px 2px rgba(0, 0, 0, 0.6), 0 0 0 1px #2b2b2b;
}

.ctl-cell {
    height: 42px;
    display: flex;
    align-items: center;
    justify-content: center;
    box-sizing: border-box;
    border-left: 1px solid #2a2a2a;
}

.ctl-cell:first-child {
    border-left: none;
}

.w65 { width: 65px; }
.w64 { width: 64px; }

.g-func { width: 277px; }
.g-auto { margin-left: 17px; }
.g-snap { margin-left: 17px; }
.g-tool { margin-left: 511px; }
.g-fit { margin-left: 674px; }
.g-zoom { margin-left: 18px; }

.func {
    width: 152px;
    justify-content: flex-start;
    padding-left: 47px;
}

.show {
    width: 125px;
    justify-content: flex-start;
    padding-left: 20px;
}

.chev {
    margin-left: 24px;
}

.tool {
    width: 85px;
}

.tool .chev {
    margin-left: 14px;
}

.panel-body {
    flex: 1;
    margin-top: 2px;
    display: flex;
    min-height: 0;
}

/* inspector, channel strips */
.inspector {
    width: 455px;
    flex: none;
    display: flex;
    flex-direction: column;
    background: #505050;
}

.strips {
    flex: 1;
    display: flex;
}

.strip {
    width: 228px;
    box-sizing: border-box;
    padding: 190px 0 0 43px;
    display: flex;
    flex-direction: column;
    border-right: 2px solid #404040;
    font-size: 22px;
}

.strip > * {
    width: 138px;
    flex: none;
}

.strip.second {
    width: 227px;
    padding-top: 428px;
    border-right: none;
}

.s-btn {
    display: flex;
    align-items: center;
    justify-content: center;
    height: 36px;
    box-sizing: border-box;
    background: #424242;
    border: 1px solid #2c2c2c;
    border-radius: 7px;
    white-space: nowrap;
    color: #f0f0f0;
}

.s-slot {
    display: flex;
    align-items: center;
    justify-content: center;
    box-sizing: border-box;
    background: #474747;
    border-radius: 5px;
    color: #262626;
}

.s-bar {
    height: 14px;
    width: 134px;
    margin: 8px 0 0 2px;
    border-radius: 2px;
    background: #2c2c2c;
}

.s-eq {
    height: 62px;
    margin-top: 6px;
    background: #222;
    overflow: hidden;
}

.midi {
    height: 35px;
    margin-top: 8px;
}

.blue {
    background: #2a5ba0;
    border-color: #1a3c70;
}

.exs {
    margin-top: 19px;
    height: 35px;
}

.comp {
    margin-top: 15px;
    font-size: 23px;
    height: 35px;
}

.strip .blue:not(.exs):not(.comp) {
    height: 35px;
    font-size: 23px;
}

.s-empty {
    height: 15px;
    background: #474747;
    border-radius: 0 0 5px 5px;
}

.s-send {
    height: 36px;
    margin-top: 18px;
    display: flex;
    justify-content: space-between;
    align-items: center;
}

.send-slot {
    width: 100px;
    height: 36px;
}

.send-dot {
    width: 31px;
    height: 31px;
    border-radius: 50%;
    background: #474747;
}

.out {
    margin-top: 16px;
}

.group {
    height: 36px;
    width: 134px;
    margin: 10px 0 0 2px;
}

.read {
    margin-top: 10px;
    font-size: 21px;
}

.read.on {
    background: #2a8a3a;
    border-color: #1a5a28;
}

.s-knob {
    margin: 15px 0 0 34px;
    width: 70px;
}

.s-values {
    margin-top: 13px;
    display: flex;
    justify-content: space-between;
    font-size: 20px;
}

.s-values span {
    width: 66px;
    height: 36px;
    line-height: 36px;
    text-align: center;
    background: #262626;
    border-radius: 2px;
}

.s-fader {
    margin-top: 38px;
    overflow: visible;
}

.scale-num text {
    font: 15px var(--ui-font);
    fill: #b4b4b4;
    text-anchor: end;
}

.s-ms {
    display: flex;
    gap: 6px;
    margin-top: 4px;
    font-size: 23px;
}

.s-ms.ms-first {
    margin-top: 48px;
}

.s-ms .s-btn {
    width: 66px;
}

.s-bnce {
    margin-top: 8px;
    display: flex;
    justify-content: flex-end;
    font-size: 26px;
}

.s-bnce .s-btn {
    width: 66px;
}

.s-name {
    margin-top: 18px;
    height: 36px;
    line-height: 36px;
    text-align: center;
    white-space: nowrap;
    color: #eee;
}

.audio {
    height: 86px;
}

.group.g2 {
    margin-top: 116px;
}

/* track list */
.tracks {
    width: 653px;
    flex: none;
    margin-left: 5px;
    display: flex;
    flex-direction: column;
    background: #505050;
}

.tracks-head {
    height: 70px;
    flex: none;
    display: flex;
    align-items: center;
    justify-content: flex-end;
    padding-right: 19px;
    background: #3a3a3a;
    border-bottom: 2px solid #0c0c0c;
}

.add-btn {
    width: 64px;
    height: 40px;
    display: flex;
    align-items: center;
    justify-content: center;
    background: #333;
    border-radius: 7px;
    box-shadow: 0 1px 2px rgba(0, 0, 0, 0.6);
}

.track {
    height: 98px;
    flex: none;
    display: flex;
    box-sizing: border-box;
    background: #575757;
    border-bottom: 2px solid #444;
}

.track.selected {
    background: linear-gradient(#7c7c7c, #6c6c6c);
    border-bottom-color: #4a4a4a;
}

.tr-icon {
    width: 135px;
    padding: 8px 0 0 49px;
    box-sizing: border-box;
}

.tr-main {
    width: 416px;
}

.tr-name {
    height: 52px;
    line-height: 52px;
    font-size: 26px;
    white-space: nowrap;
    color: #f0f0f0;
}

.ch {
    color: #9a9a9a;
}

.tr-ctl {
    height: 36px;
    display: flex;
    align-items: center;
}

.tr-btn {
    width: 40px;
    height: 36px;
    display: flex;
    align-items: center;
    justify-content: center;
    box-sizing: border-box;
    background: #424242;
    border: 1px solid #2e2e2e;
}

.tr-btn.mute {
    width: 38px;
    border-radius: 7px 0 0 7px;
}

.tr-btn.rec {
    margin-left: 12px;
    width: 42px;
    border-radius: 7px;
}

.rec-dot {
    width: 14px;
    height: 14px;
    border-radius: 50%;
    background: #fff;
}

.rec-dot.live {
    background: #f01c2c;
}

.slider {
    width: 240px;
    height: 24px;
    margin-left: 44px;
    border-radius: 12px;
    background: #2c302e;
    position: relative;
}

.slider-knob {
    position: absolute;
    top: -6px;
    width: 36px;
    height: 36px;
    border-radius: 50%;
    box-sizing: border-box;
    border: 1px solid #bbb;
    background: #7d847f;
}

.pan {
    padding: 21px 0 0 21px;
}

.lr {
    display: flex;
    justify-content: space-between;
    width: 40px;
    margin: -3px 0 0 7px;
    font-size: 15px;
    line-height: 18px;
    color: #ccc;
}

.tracks-rest {
    flex: 1;
}

.tracks-foot {
    height: 27px;
    flex: none;
    background: #2a2a2a;
    border-top: 2px solid #0c0c0c;
}

/* timeline */
.timeline {
    flex: 1;
    min-width: 0;
    display: flex;
    flex-direction: column;
    background: #242424;
}

.tl-body {
    flex: 1;
    min-height: 0;
    display: flex;
}

.tl-main {
    width: 1674px;
    flex: none;
    display: flex;
    flex-direction: column;
    border-left: 1px solid #0c0c0c;
    box-sizing: border-box;
}

.tl-side {
    flex: 1;
    background: #2c2c2c;
    border-left: 2px solid #151515;
}

.ruler {
    height: 72px;
    flex: none;
    background: #282828;
    overflow: hidden;
}

.bars {
    height: 34px;
    display: flex;
    margin-left: 17px;
    border-bottom: 2px solid #111;
}

.bar {
    width: 192.25px;
    flex: none;
    box-sizing: border-box;
    padding-left: 5px;
    font-size: 25px;
    line-height: 32px;
    color: #cfcfcf;
    border-left: 1px solid #5a5a5a;
}

.bar.cycle {
    background: #3c3c3c;
}

.bar.last {
    width: 118px;
}

.ticks-big {
    height: 22px;
    margin-left: 17px;
    background:
        repeating-linear-gradient(90deg, #5a5a5a 0 1.5px, transparent 1.5px 192.25px),
        repeating-linear-gradient(90deg, #5a5a5a 0 1.5px, transparent 1.5px 96.125px) 0 10px / 100% 12px no-repeat;
}

.ticks-small {
    height: 14px;
    margin-left: 17px;
    background: repeating-linear-gradient(90deg, #5a5a5a 0 1.5px, #333 1.5px 24.03px);
    border-bottom: 2px solid #000;
}

.lane {
    height: 98px;
    flex: none;
    box-sizing: border-box;
    padding: 2px 0 4px 21px;
    background: #111;
}

.region {
    height: 92px;
    position: relative;
    background: var(--region-green);
    border-radius: 5px 0 0 5px;
    box-sizing: border-box;
    overflow: hidden;
    color: #c8f5cb;
}

.region.active {
    border-bottom: 2px solid var(--region-light);
    color: #0e5a18;
}

.reg-title {
    height: 36px;
    line-height: 38px;
    padding-left: 9px;
    font-size: 22px;
    white-space: nowrap;
}

.region.active .reg-title {
    background: var(--region-light);
}

.reg-num {
    display: inline-block;
    min-width: 23px;
    height: 23px;
    line-height: 23px;
    padding: 0 1px;
    font-size: 20px;
    font-weight: bold;
    text-align: center;
    color: #8fd196;
    border: 1px solid #8fd196;
    border-left: none;
}

.region.active .reg-num {
    color: #e8ffe9;
    border-color: #e8ffe9;
}

.notes {
    position: absolute;
    left: 0;
    top: 0;
    width: 1652px;
    height: 92px;
}

.tl-rest {
    flex: 1;
}

.tl-foot {
    height: 27px;
    flex: none;
    box-sizing: border-box;
    padding: 5px 0 0 6px;
    background: #282828;
    border-top: 2px solid #0c0c0c;
}

.scroll-thumb {
    width: 467px;
    height: 16px;
    border-radius: 8px;
    background: #5c5c5c;
}

.playhead {
    position: absolute;
    left: 1202px;
    top: 346px;
    width: 2px;
    height: 1300px;
    background: #fff;
}

.playhead-cap {
    position: absolute;
    left: 1191px;
    top: 346px;
    width: 24px;
    height: 15px;
    border-radius: 5px 5px 0 0;
    background: #a8a8a8;
}

/* pull-down menus */
.menu {
    position: absolute;
    box-sizing: border-box;
    color: #161616;
    font-size: 28px;
    box-shadow: 0 6px 14px rgba(0, 0, 0, 0.25);
}

.file-menu {
    left: 322px;
    top: 84px;
    width: 370px;
    height: 706px;
    padding-top: 7px;
    background: linear-gradient(#c9cecf, #a8acae 60%, #aaaeae);
    border-radius: 0 0 10px 10px;
}

.sub-menu {
    left: 693px;
    top: 660px;
    width: 479px;
    height: 216px;
    padding-top: 8px;
    background: #adb0b1;
    border-radius: 10px;
}

.mi {
    height: 38px;
    box-sizing: border-box;
    padding: 0 16px 2px 42px;
    display: flex;
    align-items: center;
    justify-content: space-between;
    white-space: nowrap;
}

.sub-menu .mi {
    padding-right: 20px;
}

.mi.off {
    color: #7c8081;
}

.mi.hl {
    background: var(--hilite);
    color: #fff;
    border-bottom: 2px solid #d0d0d0;
}

.key {
    font-family: var(--ui-font);
    font-size: 27px;
}

.arrow {
    width: 0;
    height: 0;
    margin-right: 9px;
    border-left: 17px solid #111;
    border-top: 9px solid transparent;
    border-bottom: 9px solid transparent;
}

.mi.hl .arrow {
    border-left-color: #fff;
}

.sep {
    height: 4px;
    margin: 10px 0;
    background: #9ea3a4;
}

/* the red tutorial marks */
.mark {
    position: absolute;
    box-sizing: border-box;
    border: 8px solid var(--mark-red);
    border-radius: 3px;
}

.mark-file {
    left: 306px;
    top: 40px;
    width: 120px;
    height: 57px;
    border-width: 3px 8px 9px 16px;
}

.mark-export {
    left: 302px;
    top: 652px;
    width: 392px;
    height: 64px;
    border-width: 8px 3px 8px 20px;
}

.mark-midi {
    left: 679px;
    top: 757px;
    width: 513px;
    height: 61px;
    border-width: 10px 20px 8px 13px;
}

.mark-region {
    left: 1186px;
    top: 361px;
    width: 1704px;
    height: 132px;
    border-width: 8px;
}
```
